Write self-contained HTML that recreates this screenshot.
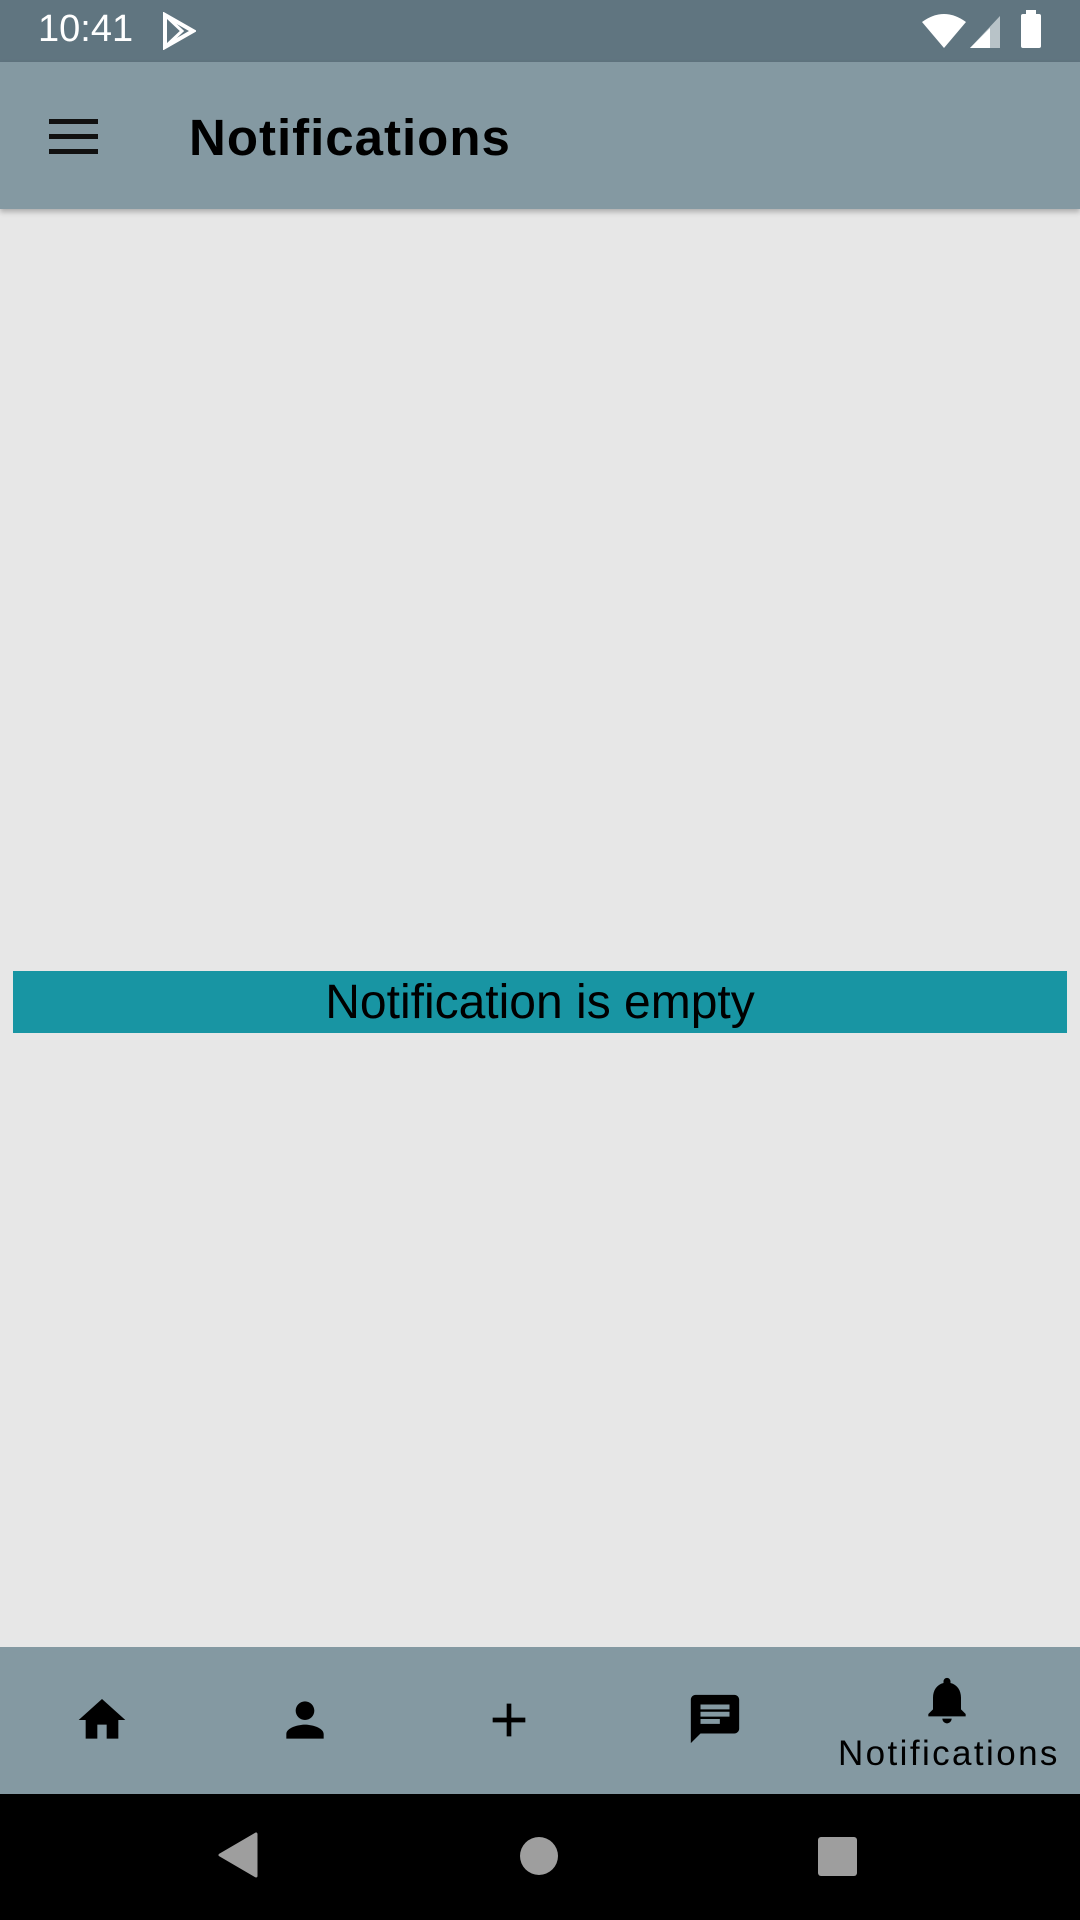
<!DOCTYPE html>
<html><head><meta charset="utf-8"><style>
body{margin:0;width:1080px;height:1920px;background:#e7e7e7;font-family:"Liberation Sans",sans-serif;position:relative;overflow:hidden}
.abs{position:absolute}
</style></head><body>
<div class="abs" style="left:0;top:0;width:1080px;height:62px;background:#607580"></div>
<div class="abs" style="left:38px;top:8px;color:#fff;font-size:38px;">10:41</div>
<svg class="abs" style="left:162px;top:12px" width="34" height="38" viewBox="0 0 34 38"><path d="M3 3 L31 19 L3 35 Z" fill="none" stroke="#fff" stroke-width="4"/><path d="M3 3 L20 19 L3 35" fill="none" stroke="#fff" stroke-width="3"/></svg>
<svg class="abs" style="left:922px;top:14px" width="44" height="34" viewBox="0 0 44 34"><path d="M0 8 Q22 -8 44 8 L22 34 Z" fill="#fff"/></svg>
<svg class="abs" style="left:970px;top:16px" width="34" height="34" viewBox="0 0 34 34"><path d="M30 0 V32 H0 Z" fill="#b8c3c8"/><path d="M20 12 V32 H0 Z" fill="#fff"/></svg>
<div class="abs" style="left:1021px;top:14px;width:20px;height:34px;background:#fff;border-radius:2px"></div>
<div class="abs" style="left:1026px;top:10px;width:10px;height:5px;background:#fff"></div>
<div class="abs" style="left:0;top:62px;width:1080px;height:147px;background:#8499a2;box-shadow:0 3px 5px rgba(0,0,0,.25)"></div>
<div class="abs" style="left:49px;top:119px;width:49px;height:5px;background:#111"></div>
<div class="abs" style="left:49px;top:134px;width:49px;height:5px;background:#111"></div>
<div class="abs" style="left:49px;top:149px;width:49px;height:5px;background:#111"></div>
<div class="abs" style="left:189px;top:108px;font-size:51px;font-weight:bold;letter-spacing:1px;color:#000">Notifications</div>
<div class="abs" style="left:13px;top:971px;width:1054px;height:62px;background:#1895a3;text-align:center;line-height:64px;font-size:48px;color:#000">Notification is empty</div>
<div class="abs" style="left:0;top:1647px;width:1080px;height:147px;background:#8499a2"></div>
<svg class="abs" style="left:74px;top:1692px" width="56" height="56" viewBox="0 0 24 24"><path d="M10 20v-6h4v6h5v-8h3L12 3 2 12h3v8z"/></svg>
<svg class="abs" style="left:277px;top:1692px" width="56" height="56" viewBox="0 0 24 24"><path d="M12 12c2.2 0 4-1.8 4-4s-1.8-4-4-4-4 1.8-4 4 1.8 4 4 4zm0 2c-2.7 0-8 1.3-8 4v2h16v-2c0-2.7-5.3-4-8-4z"/></svg>
<svg class="abs" style="left:481px;top:1692px" width="56" height="56" viewBox="0 0 24 24"><path d="M19 13h-6v6h-2v-6H5v-2h6V5h2v6h6v2z"/></svg>
<svg class="abs" style="left:686px;top:1690px" width="58" height="58" viewBox="0 0 24 24"><path d="M20 2H4c-1.1 0-2 .9-2 2v18l4-4h14c1.1 0 2-.9 2-2V4c0-1.1-.9-2-2-2zM6 9h12v2H6V9zm8 5H6v-2h8v2zm4-6H6V6h12v2z"/></svg>
<svg class="abs" style="left:919px;top:1672px" width="56" height="56" viewBox="0 0 24 24"><path d="M12 22c1.1 0 2-.9 2-2h-4c0 1.1.9 2 2 2zm6-6v-5c0-3.1-1.6-5.6-4.5-6.3V4c0-.8-.7-1.5-1.5-1.5s-1.5.7-1.5 1.5v.7C7.6 5.4 6 7.9 6 11v5l-2 2v1h16v-1l-2-2z"/></svg>
<div class="abs" style="left:838px;top:1734px;font-size:35px;color:#000;letter-spacing:2.4px">Notifications</div>
<div class="abs" style="left:0;top:1794px;width:1080px;height:126px;background:#000"></div>
<svg class="abs" style="left:218px;top:1832px" width="40" height="46" viewBox="0 0 40 46"><path d="M38 2 V44 L2 23 Z" fill="#9e9e9e" stroke="#9e9e9e" stroke-width="3" stroke-linejoin="round"/></svg>
<div class="abs" style="left:520px;top:1837px;width:38px;height:38px;border-radius:50%;background:#9e9e9e"></div>
<div class="abs" style="left:818px;top:1837px;width:39px;height:39px;border-radius:3px;background:#9e9e9e"></div>
</body></html>
